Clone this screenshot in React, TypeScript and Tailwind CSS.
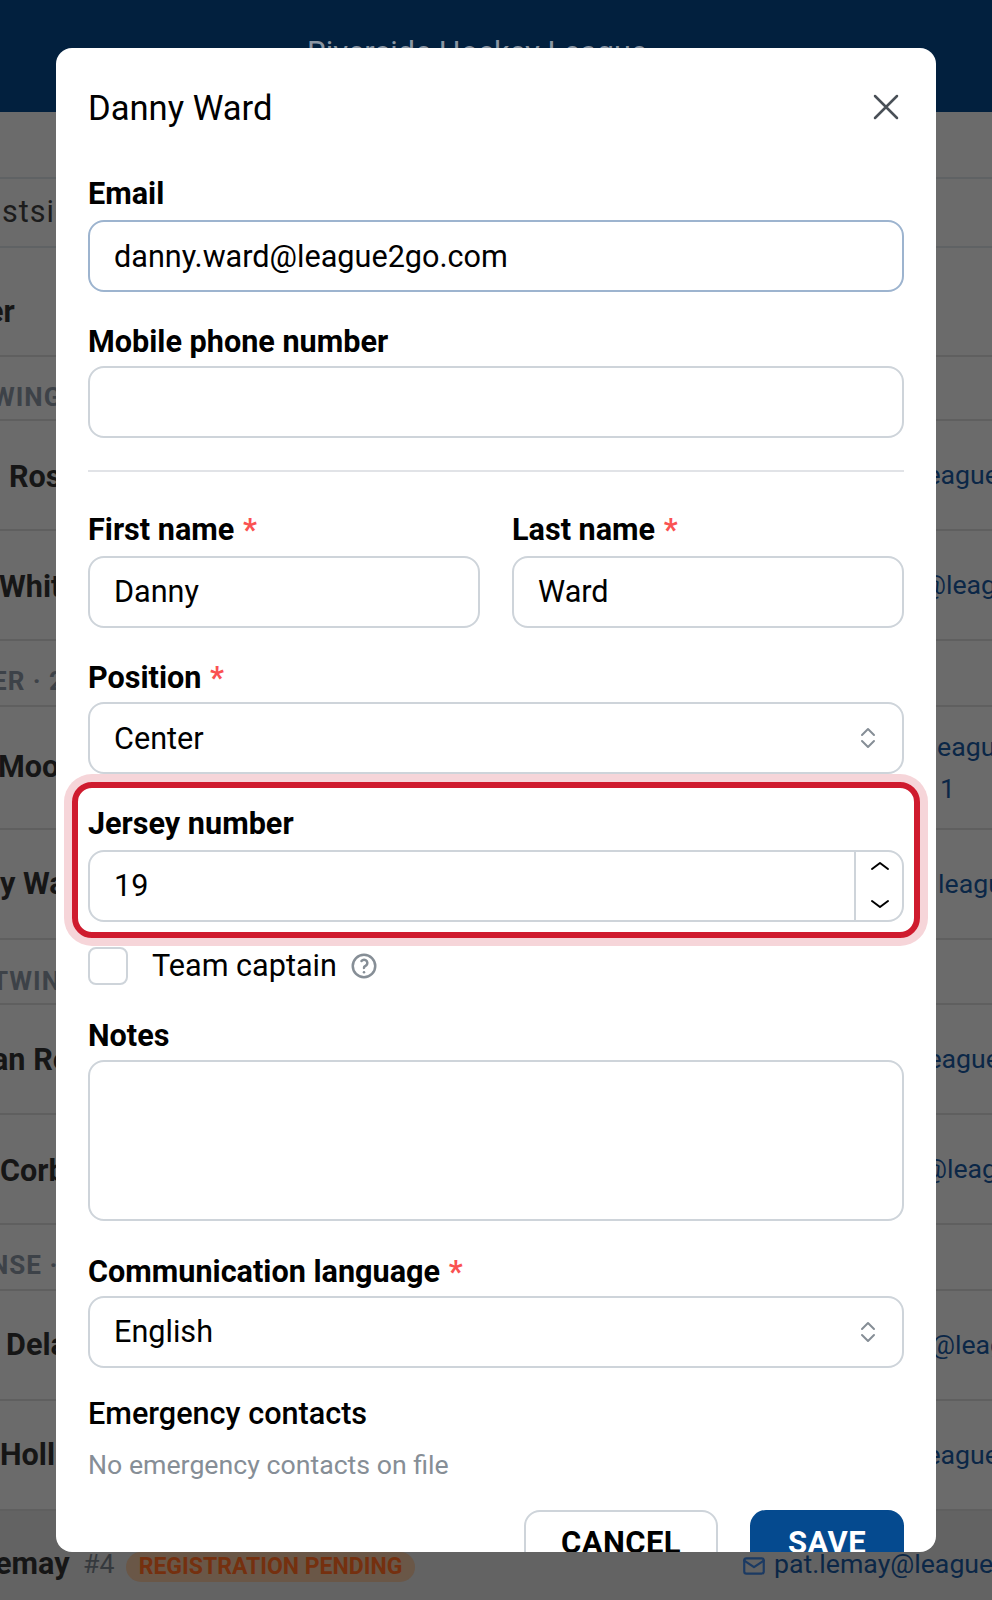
const inputCls =
  'block h-[72px] w-full rounded-2xl border-2 bg-white px-6 text-[30.6px] text-black outline-none';
const labelCls = 'block h-[38px] text-[30.6px] font-bold leading-[38px] text-black';

function Star() {
  return <span className="ml-[1px] text-[#fa5252]">*</span>;
}

function Selector() {
  return (
    <svg
      className="absolute right-[26px] top-[24px] h-[24px] w-[20px] text-[#868e96]"
      viewBox="0 0 20 24"
      fill="none"
      stroke="currentColor"
      strokeWidth="2"
      strokeLinecap="round"
      strokeLinejoin="round"
    >
      <path d="M4 9l6-6 6 6" />
      <path d="M4 15l6 6 6-6" />
    </svg>
  );
}

export default function App() {
  return (
    <div className="relative h-[1600px] w-[992px] overflow-hidden bg-[#6b6b6b] font-['Roboto',sans-serif]">
      {/* page behind the dialog */}
      <header className="flex h-[112px] justify-center bg-[#02203e] pr-[38px] pt-[33px] text-[30.6px] leading-[40px] text-[#8b96a3]">
        Riverside Hockey League
      </header>

      <div className="h-[65px]" />
      <div className="flex h-[71px] items-center border-y-2 border-[#5f6264] pb-[2px] text-[30.6px] tracking-[1px] text-[#1c1c1c]">
        <span className="-ml-[34px] whitespace-nowrap">Eastside</span>
      </div>
      <div className="h-[20px]" />
      <Row name="Roster" nameCls="-ml-[76px]" h="h-[89px]" />
      <Section title="WINGS" cls="-ml-[8px] mt-[2px]" h="h-[64px]" />
      <Row name="Ross" nameCls="ml-[9px] mt-[4px]" email="@league2go.com" emailCls="ml-[896px]" h="h-[110px]" />
      <Row name="Whitney" nameCls="-ml-[1px] mt-[4px]" email="@league2go.com" emailCls="ml-[922px]" h="h-[110px]" />
      <Section title="ER · 2" cls="-ml-[8px]" h="h-[66px]" />
      <div className="relative flex h-[123px] items-center border-b-2 border-[#5f5f5f] text-[26.7px]">
        <span className="absolute -left-[2px] top-[37px] whitespace-nowrap text-[30.6px] font-bold text-[#161616]">Moore</span>
        <span className="absolute left-[937px] top-[20px] whitespace-nowrap text-[#0b2747]">eague2go.com</span>
        <span className="absolute left-[940px] top-[62px] whitespace-nowrap text-[#0b2747]">1</span>
      </div>
      <Row name="y Ward" nameCls="" email="league2go.com" emailCls="ml-[938px]" h="h-[110px]" />
      <Section title="TWINGS" cls="-ml-[8px] mt-[4px]" h="h-[65px]" />
      <Row name="an Reed" nameCls="-ml-[8px] mt-[2px]" email="@league2go.com" emailCls="ml-[897px]" h="h-[110px]" />
      <Row name="Corbin" nameCls="mt-[4px]" email="@league2go.com" emailCls="ml-[923px]" h="h-[110px]" />
      <Section title="NSE ·" cls="-ml-[10px]" h="h-[66px]" />
      <Row name="Delaney" nameCls="ml-[6px]" email="@league2go.com" emailCls="ml-[931px]" h="h-[110px]" />
      <Row name="Hollis" nameCls="" email="@league2go.com" emailCls="ml-[896px]" h="h-[110px]" />

      <div className="relative h-[89px] bg-[#636363] text-[26.7px]">
        <span className="absolute -left-[5px] top-[35px] text-[30.6px] font-bold leading-[36px] text-[#161616]">emay</span>
        <span className="absolute left-[83px] top-[35px] leading-[36px] text-[#35393d]">#4</span>
        <span className="absolute left-[126px] top-[41px] flex h-[30px] w-[289px] items-center justify-center rounded-full bg-[#6a5747] text-[23px] font-bold text-[#75300f]">
          REGISTRATION PENDING
        </span>
        <svg
          className="absolute left-[741px] top-[42px] h-[26px] w-[26px] text-[#1b3a63]"
          viewBox="0 0 24 24"
          fill="none"
          stroke="currentColor"
          strokeWidth="2"
          strokeLinecap="round"
          strokeLinejoin="round"
        >
          <rect x="3" y="5" width="18" height="14" rx="2" />
          <path d="M3 7l9 6 9-6" />
        </svg>
        <span className="absolute left-[774px] top-[35px] whitespace-nowrap leading-[36px] text-[#0b2747]">
          pat.lemay@league2go.com
        </span>
      </div>

      {/* dialog */}
      <div className="absolute left-[56px] top-[48px] h-[1504px] w-[880px] overflow-hidden rounded-2xl bg-white px-8">
        <div className="flex h-[118px] items-center justify-between">
          <h2 className="pt-[2px] text-[34.6px] font-normal leading-none text-black">Danny Ward</h2>
          <svg className="mr-[4px] h-[28px] w-[28px] text-[#495057]" viewBox="0 0 28 28" fill="none" stroke="currentColor" strokeWidth="2.5" strokeLinecap="round">
            <path d="M3 3l22 22M25 3L3 25" />
          </svg>
        </div>

        <label className={`${labelCls} mb-[7px] mt-[9px]`}>Email</label>
        <input readOnly value="danny.ward@league2go.com" className={`${inputCls} border-[#9db4cf]`} />

        <label className={`${labelCls} mb-[5px] mt-[31px]`}>Mobile phone number</label>
        <input readOnly className={`${inputCls} border-[#ced4da]`} />

        <div className="mb-[39px] mt-[32px] h-[2px] bg-[#e1e3e7]" />

        <div className="flex gap-8">
          <div className="flex-1">
            <label className={`${labelCls} mb-[7px]`}>
              First name <Star />
            </label>
            <input readOnly value="Danny" className={`${inputCls} border-[#ced4da] pb-[2px]`} />
          </div>
          <div className="flex-1">
            <label className={`${labelCls} mb-[7px]`}>
              Last name <Star />
            </label>
            <input readOnly value="Ward" className={`${inputCls} border-[#ced4da] pb-[2px]`} />
          </div>
        </div>

        <label className={`${labelCls} mb-[5px] mt-[31px]`}>
          Position <Star />
        </label>
        <div className="relative">
          <input readOnly value="Center" className={`${inputCls} border-[#ced4da]`} />
          <Selector />
        </div>

        <div className="relative mt-[31px]">
          {/* tutorial highlight over the field */}
          <div className="pointer-events-none absolute -bottom-[16px] -left-4 -right-4 -top-[23px] rounded-[20px] border-[6px] border-[#cf1b2e] shadow-[0_0_0_8px_#f6d5d9]" />
          <label className={`${labelCls} mb-[7px]`}>Jersey number</label>
          <div className="relative">
            <input readOnly value="19" className={`${inputCls} border-[#ced4da] pb-[2px]`} />
            <div className="absolute bottom-0 right-0 top-0 flex w-[50px] flex-col items-center justify-between border-l-2 border-[#ced4da] pb-[12px] pt-[10px]">
              <svg className="h-[12px] w-[20px]" viewBox="0 0 20 12" fill="none" stroke="black" strokeWidth="2" strokeLinecap="round" strokeLinejoin="round">
                <path d="M2 9l8-6 8 6" />
              </svg>
              <svg className="h-[12px] w-[20px]" viewBox="0 0 20 12" fill="none" stroke="black" strokeWidth="2" strokeLinecap="round" strokeLinejoin="round">
                <path d="M2 3l8 6 8-6" />
              </svg>
            </div>
          </div>
        </div>

        <div className="mt-[25px] flex h-[38px] items-center">
          <div className="h-[38px] w-[40px] rounded-lg border-2 border-[#ced4da] bg-white" />
          <span className="ml-6 text-[30.6px] text-black">Team captain</span>
          <svg className="ml-[12px] h-[30px] w-[30px] text-[#868e96]" viewBox="0 0 24 24" fill="none" stroke="currentColor" strokeWidth="2" strokeLinecap="round" strokeLinejoin="round">
            <circle cx="12" cy="12" r="9" />
            <path d="M12 17v.01" />
            <path d="M12 13.5a1.5 1.5 0 0 1 1-1.5 2.6 2.6 0 1 0-3-4" />
          </svg>
        </div>

        <label className={`${labelCls} mb-[5px] mt-[32px]`}>Notes</label>
        <textarea readOnly className="block h-[161px] w-full resize-none rounded-2xl border-2 border-[#ced4da] bg-white outline-none" />

        <label className={`${labelCls} mb-[5px] mt-[32px]`}>
          Communication language <Star />
        </label>
        <div className="relative">
          <input readOnly value="English" className={`${inputCls} border-[#ced4da] pb-[2px]`} />
          <Selector />
        </div>

        <div className="mt-[27px] h-[38px] text-[30.6px] font-medium leading-[38px] text-black">Emergency contacts</div>
        <div className="mt-[13px] h-[38px] text-[26.7px] leading-[38px] text-[#868e96]">No emergency contacts on file</div>

        <div className="mt-[26px] flex justify-end gap-8">
          <button className="h-[72px] w-[194px] rounded-2xl border-2 border-[#ced4da] bg-white pb-[6px] text-[31px] font-bold tracking-[0.4px] text-black">CANCEL</button>
          <button className="h-[72px] w-[154px] rounded-2xl bg-[#054a8f] pb-[6px] text-[31px] font-bold tracking-[0.4px] text-white">SAVE</button>
        </div>
      </div>
    </div>
  );
}

function Row({ name, nameCls, email, emailCls, h }: { name: string; nameCls: string; email?: string; emailCls?: string; h: string }) {
  return (
    <div className={`relative flex items-center border-b-2 border-[#5f5f5f] ${h}`}>
      <span className={`absolute left-0 whitespace-nowrap text-[30.6px] font-bold text-[#161616] ${nameCls}`}>{name}</span>
      {email && <span className={`absolute left-0 whitespace-nowrap text-[26.7px] text-[#0b2747] ${emailCls}`}>{email}</span>}
    </div>
  );
}

function Section({ title, cls, h }: { title: string; cls: string; h: string }) {
  return (
    <div className={`flex items-center border-b-2 border-[#5f5f5f] pt-[16px] text-[26px] font-bold tracking-[1px] text-[#3d4248] ${h}`}>
      <span className={`whitespace-nowrap ${cls}`}>{title}</span>
    </div>
  );
}
